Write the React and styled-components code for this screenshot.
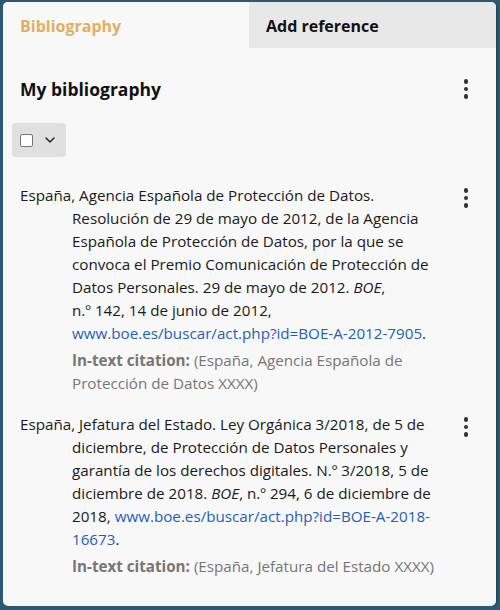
import React from 'react';
import styled, { createGlobalStyle } from 'styled-components';

const GlobalStyle = createGlobalStyle`
  body {
    margin: 0;
    background: #2c5a76;
    font-family: "Open Sans", "Noto Sans", "Liberation Sans", sans-serif;
  }
`;

const Card = styled.div`
  margin: 2px 0 0 3px;
  width: 493px;
  height: 604px;
  background: #f8f8f8;
  border-radius: 5px;
  box-shadow: 1px 1px 2px rgba(0, 0, 0, 0.35);
  display: flex;
  flex-direction: column;
`;

const Tabs = styled.div`
  display: grid;
  grid-template-columns: 246px 1fr;
  height: 46px;
`;

const Tab = styled.div`
  display: flex;
  align-items: center;
  padding-left: 17px;
  padding-top: 1px;
  font-size: 16px;
  font-weight: 700;
  color: ${props => (props.active ? '#e2ae62' : '#111')};
  background: ${props => (props.active ? '#f8f8f8' : '#e8e8e8')};
  border-radius: ${props => (props.active ? '5px 0 0 0' : '0 5px 0 0')};
`;

const Panel = styled.div`
  padding: 28px 0 0;
`;

const HeaderRow = styled.div`
  display: flex;
  align-items: center;
  justify-content: space-between;
  padding: 0 20px 0 17px;
  height: 26px;
`;

const Title = styled.h2`
  margin: 0;
  font-size: 17.5px;
  font-weight: 700;
  color: #111;
`;

const Kebab = styled.button`
  display: flex;
  flex-direction: column;
  align-items: center;
  gap: 3px;
  width: 20px;
  padding: 0;
  border: 0;
  background: transparent;
  cursor: pointer;

  span {
    width: 4.5px;
    height: 4.5px;
    border-radius: 50%;
    background: #333;
  }
`;

const SelectButton = styled.div`
  display: flex;
  align-items: center;
  gap: 12px;
  width: 54px;
  height: 34px;
  box-sizing: border-box;
  margin: 21px 0 0 9px;
  padding-left: 8px;
  background: #e0e0e0;
  border-radius: 4px;
`;

const Check = styled.span`
  width: 13px;
  height: 13px;
  box-sizing: border-box;
  border: 1px solid #767676;
  border-radius: 2px;
  background: #fff;
`;

const List = styled.div`
  margin-top: 27px;
  display: flex;
  flex-direction: column;
  gap: 18px;
`;

const Entry = styled.div`
  display: flex;
  align-items: flex-start;
  padding: 0 20px 0 17px;
`;

const EntryBody = styled.div`
  width: 420px;
  font-size: 15.2px;
  line-height: 23px;
  color: #1a1a1a;
`;

const Reference = styled.p`
  margin: 0;
  padding-left: 52px;
  text-indent: -52px;
`;

const Link = styled.a`
  color: #1f5fb5;
  text-decoration: none;
`;

const Citation = styled.p`
  margin: 4px 0 0;
  padding-left: 52px;
  color: #767676;

  b {
    font-weight: 700;
  }
`;

const EntryMenu = styled(Kebab)`
  margin: 4px 0 0 auto;
`;

const Dots = ({ as: Comp = Kebab }) => (
  <Comp aria-label="More options">
    <span />
    <span />
    <span />
  </Comp>
);

const Chevron = () => (
  <svg width="10" height="6" viewBox="0 0 10 6" fill="none">
    <path d="M1 1l4 4 4-4" stroke="#222" strokeWidth="1.5" strokeLinecap="round" strokeLinejoin="round" />
  </svg>
);

const entries = [
  {
    id: 1,
    text: (
      <>
        España, Agencia Española de Protección de Datos. Resolución de 29 de mayo de 2012, de la Agencia
        Española de Protección de Datos, por la que se convoca el Premio Comunicación de Protección de Datos
        Personales. 29 de mayo de 2012. <i>BOE</i>, n.º{'\u00a0'}142, 14 de junio de 2012,{' '}
        <Link href="#">www.boe.es/buscar/act.php?id=BOE-A-2012-7905</Link>.
      </>
    ),
    citation: '(España, Agencia Española de Protección de Datos XXXX)',
  },
  {
    id: 2,
    text: (
      <>
        España, Jefatura del Estado. Ley Orgánica 3/2018, de 5 de diciembre, de Protección de Datos Personales
        y garantía de los derechos digitales. N.º 3/2018, 5 de diciembre de 2018. <i>BOE</i>, n.º 294, 6 de
        diciembre de 2018, <Link href="#">www.boe.es/buscar/act.php?id=BOE-A-2018-16673</Link>.
      </>
    ),
    citation: '(España, Jefatura del Estado XXXX)',
  },
];

const App = () => (
  <>
    <GlobalStyle />
    <Card>
      <Tabs>
        <Tab active>Bibliography</Tab>
        <Tab>Add reference</Tab>
      </Tabs>
      <Panel>
        <HeaderRow>
          <Title>My bibliography</Title>
          <Dots />
        </HeaderRow>
        <SelectButton>
          <Check />
          <Chevron />
        </SelectButton>
        <List>
          {entries.map(entry => (
            <Entry key={entry.id}>
              <EntryBody>
                <Reference>{entry.text}</Reference>
                <Citation>
                  <b>In-text citation:</b> {entry.citation}
                </Citation>
              </EntryBody>
              <Dots as={EntryMenu} />
            </Entry>
          ))}
        </List>
      </Panel>
    </Card>
  </>
);

export default App;
